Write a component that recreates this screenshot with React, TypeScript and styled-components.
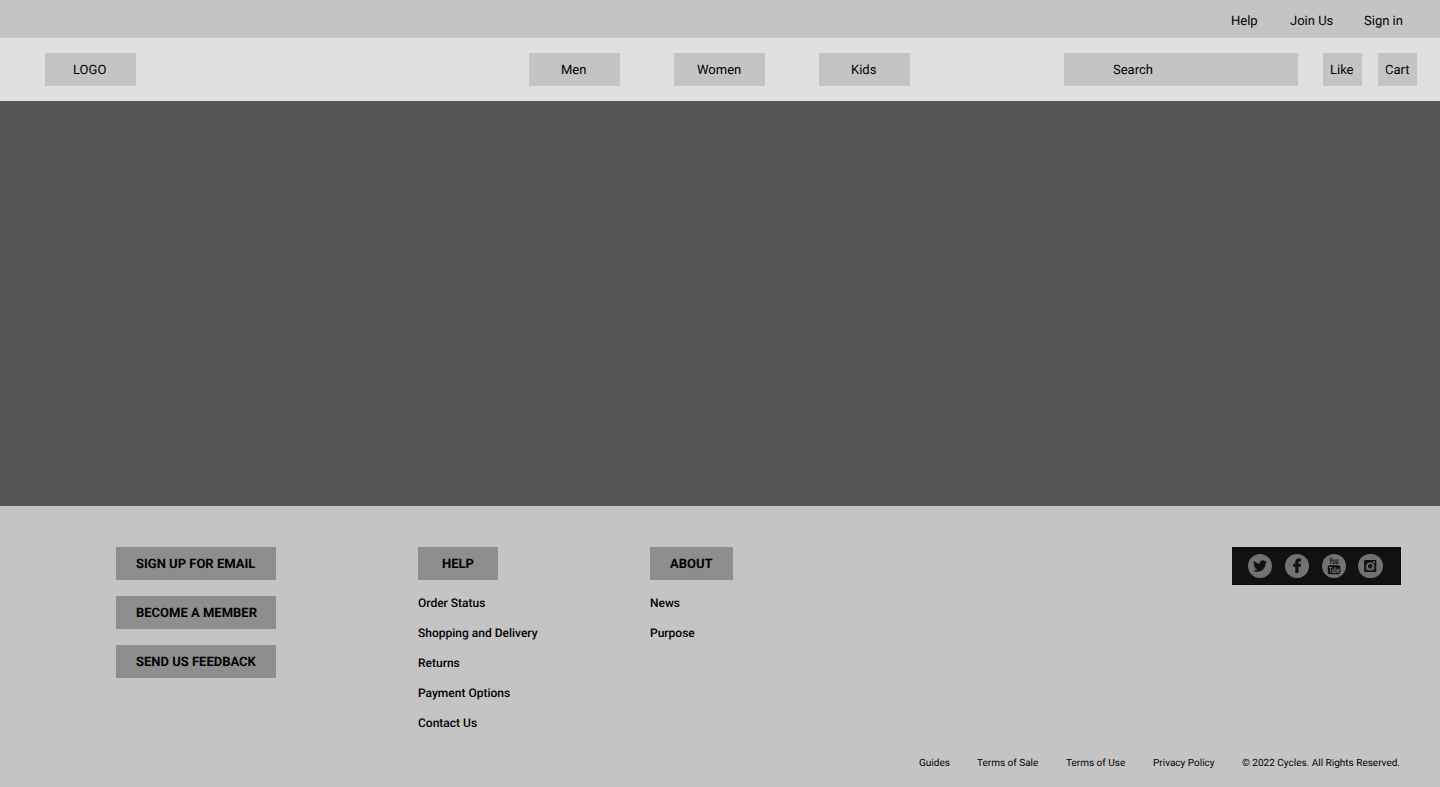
import React from 'react';
import styled, { createGlobalStyle } from 'styled-components';
import { FaTwitter } from 'react-icons/fa';

const GlobalStyle = createGlobalStyle`
  * { box-sizing: border-box; }
  body {
    margin: 0;
    background: #c4c4c4;
    color: #000;
    font-family: Roboto, 'Liberation Sans', sans-serif;
    font-size: 13px;
    line-height: 15px;
    text-rendering: geometricPrecision;
  }
  a { color: inherit; text-decoration: none; white-space: nowrap; }
`;

const Page = styled.div`
  display: flex;
  flex-direction: column;
  width: 1440px;
  height: 787px;
  overflow: hidden;
`;

const TopBar = styled.nav`
  display: flex;
  height: 38px;
  padding: 14px 0 0 1231px;
`;

const TopLink = styled.a<{ $width: number }>`
  flex: 0 0 ${p => p.$width}px;
`;

const Header = styled.header`
  display: flex;
  align-items: center;
  height: 63px;
  padding: 0 23px 0 45px;
  background: #e0e0e0;
`;

const Tile = styled.a<{ $width: number; $inset: number }>`
  display: block;
  width: ${p => p.$width}px;
  height: 33px;
  padding: 10px 0 0 ${p => p.$inset}px;
  background: #c4c4c4;
`;

const MainNav = styled.nav`
  display: flex;
  gap: 54px;
  margin-left: 393px;
`;

const Tools = styled.div`
  display: flex;
  gap: 16px;
  margin-left: auto;
`;

const SearchTile = styled(Tile)`
  margin-right: 9px;
`;

const Hero = styled.main`
  height: 405px;
  background: #555;
`;

const Footer = styled.footer`
  display: flex;
  flex-direction: column;
  flex: 1;
  padding: 41px 39px 0 116px;
  background: #c4c4c4;
`;

const FooterColumns = styled.div`
  display: flex;
  align-items: flex-start;
  height: 211px;
`;

const Column = styled.div<{ $width: number }>`
  display: flex;
  flex-direction: column;
  align-items: flex-start;
  width: ${p => p.$width}px;
`;

const Actions = styled(Column)`
  gap: 16px;
`;

const FooterButton = styled.a<{ $width: number; $inset?: number }>`
  width: ${p => p.$width}px;
  height: 33px;
  padding: 10px 0 0 ${p => p.$inset ?? 20}px;
  background: #8e8e8e;
  font-weight: 700;
`;

const LinkList = styled.div`
  display: flex;
  flex-direction: column;
  gap: 16px;
  margin-top: 16px;
  font-size: 12px;
  font-weight: 500;
  line-height: 14px;
`;

const Social = styled.div`
  display: flex;
  align-items: center;
  gap: 12.6px;
  width: 169px;
  height: 38px;
  margin-left: auto;
  padding-left: 16px;
  background: #111;
`;

const SocialLink = styled.a`
  display: grid;
  place-items: center;
  width: 24.2px;
  height: 24.2px;
  border-radius: 50%;
  background: #727272;
  color: #111;
  svg { display: block; }
`;

const Legal = styled.div`
  display: flex;
  padding-left: 803px;
  font-size: 10px;
  line-height: 12px;
`;

const LegalItem = styled.a<{ $width: number }>`
  flex: 0 0 ${p => p.$width}px;
`;

const FacebookIcon = () => (
  <svg width="24" height="24" viewBox="0 0 24 24" fill="currentColor">
    <path d="M10.3 19v-6.3H8.2V9.7h2.1V8.2c0-2.3 1.2-3.7 3.5-3.7h2.1v3h-1.3c-.9 0-1.1.4-1.1 1.1v1.1h2.5l-.3 3h-2.2V19z" />
  </svg>
);

const YouTubeIcon = () => (
  <svg width="24" height="24" viewBox="0 0 24 24" fontFamily="Roboto, sans-serif" fontWeight="700">
    <g transform="translate(7.2 10.1) scale(.62 1)">
      <text fontSize="8.8" fill="#111">You</text>
    </g>
    <rect x="5.8" y="11.2" width="12.6" height="9" rx="2" fill="#111" />
    <g transform="translate(6.9 18.6) scale(.57 1)">
      <text fontSize="8.4" fill="#727272">Tube</text>
    </g>
  </svg>
);

const InstagramIcon = () => (
  <svg width="24" height="24" viewBox="0 0 24 24">
    <rect x="6.1" y="5.9" width="12.2" height="12.2" rx="1" fill="#111" />
    <path d="M7.9 10.5h1.3a3.5 3.5 0 1 0 6 0h1.3v5.3a.6.6 0 0 1-.6.6H8.5a.6.6 0 0 1-.6-.6z" fill="#404040" />
    <circle cx="12.2" cy="12.3" r="3.1" fill="none" stroke="#727272" strokeWidth="1.5" />
    <rect x="14.9" y="7.2" width="1.8" height="1.8" rx=".3" fill="#727272" />
  </svg>
);

export default function App() {
  return (
    <>
      <GlobalStyle />
      <Page>
        <TopBar>
          <TopLink $width={59}>Help</TopLink>
          <TopLink $width={74}>Join Us</TopLink>
          <TopLink $width={60}>Sign in</TopLink>
        </TopBar>
        <Header>
          <Tile $width={91} $inset={28}>LOGO</Tile>
          <MainNav>
            <Tile $width={91} $inset={32}>Men</Tile>
            <Tile $width={91} $inset={23}>Women</Tile>
            <Tile $width={91} $inset={32}>Kids</Tile>
          </MainNav>
          <Tools>
            <SearchTile $width={234} $inset={49}>Search</SearchTile>
            <Tile $width={39} $inset={7}>Like</Tile>
            <Tile $width={39} $inset={7}>Cart</Tile>
          </Tools>
        </Header>
        <Hero />
        <Footer>
          <FooterColumns>
            <Actions $width={302}>
              <FooterButton $width={160}>SIGN UP FOR EMAIL</FooterButton>
              <FooterButton $width={160}>BECOME A MEMBER</FooterButton>
              <FooterButton $width={160}>SEND US FEEDBACK</FooterButton>
            </Actions>
            <Column $width={232}>
              <FooterButton $width={80} $inset={24}>HELP</FooterButton>
              <LinkList>
                <a>Order Status</a>
                <a>Shopping and Delivery</a>
                <a>Returns</a>
                <a>Payment Options</a>
                <a>Contact Us</a>
              </LinkList>
            </Column>
            <Column $width={83}>
              <FooterButton $width={83}>ABOUT</FooterButton>
              <LinkList>
                <a>News</a>
                <a>Purpose</a>
              </LinkList>
            </Column>
            <Social>
              <SocialLink aria-label="Twitter"><FaTwitter size={14} /></SocialLink>
              <SocialLink aria-label="Facebook"><FacebookIcon /></SocialLink>
              <SocialLink aria-label="YouTube"><YouTubeIcon /></SocialLink>
              <SocialLink aria-label="Instagram"><InstagramIcon /></SocialLink>
            </Social>
          </FooterColumns>
          <Legal>
            <LegalItem $width={58}>Guides</LegalItem>
            <LegalItem $width={89}>Terms of Sale</LegalItem>
            <LegalItem $width={87}>Terms of Use</LegalItem>
            <LegalItem $width={89}>Privacy Policy</LegalItem>
            <LegalItem $width={160}>© 2022 Cycles. All Rights Reserved.</LegalItem>
          </Legal>
        </Footer>
      </Page>
    </>
  );
}
